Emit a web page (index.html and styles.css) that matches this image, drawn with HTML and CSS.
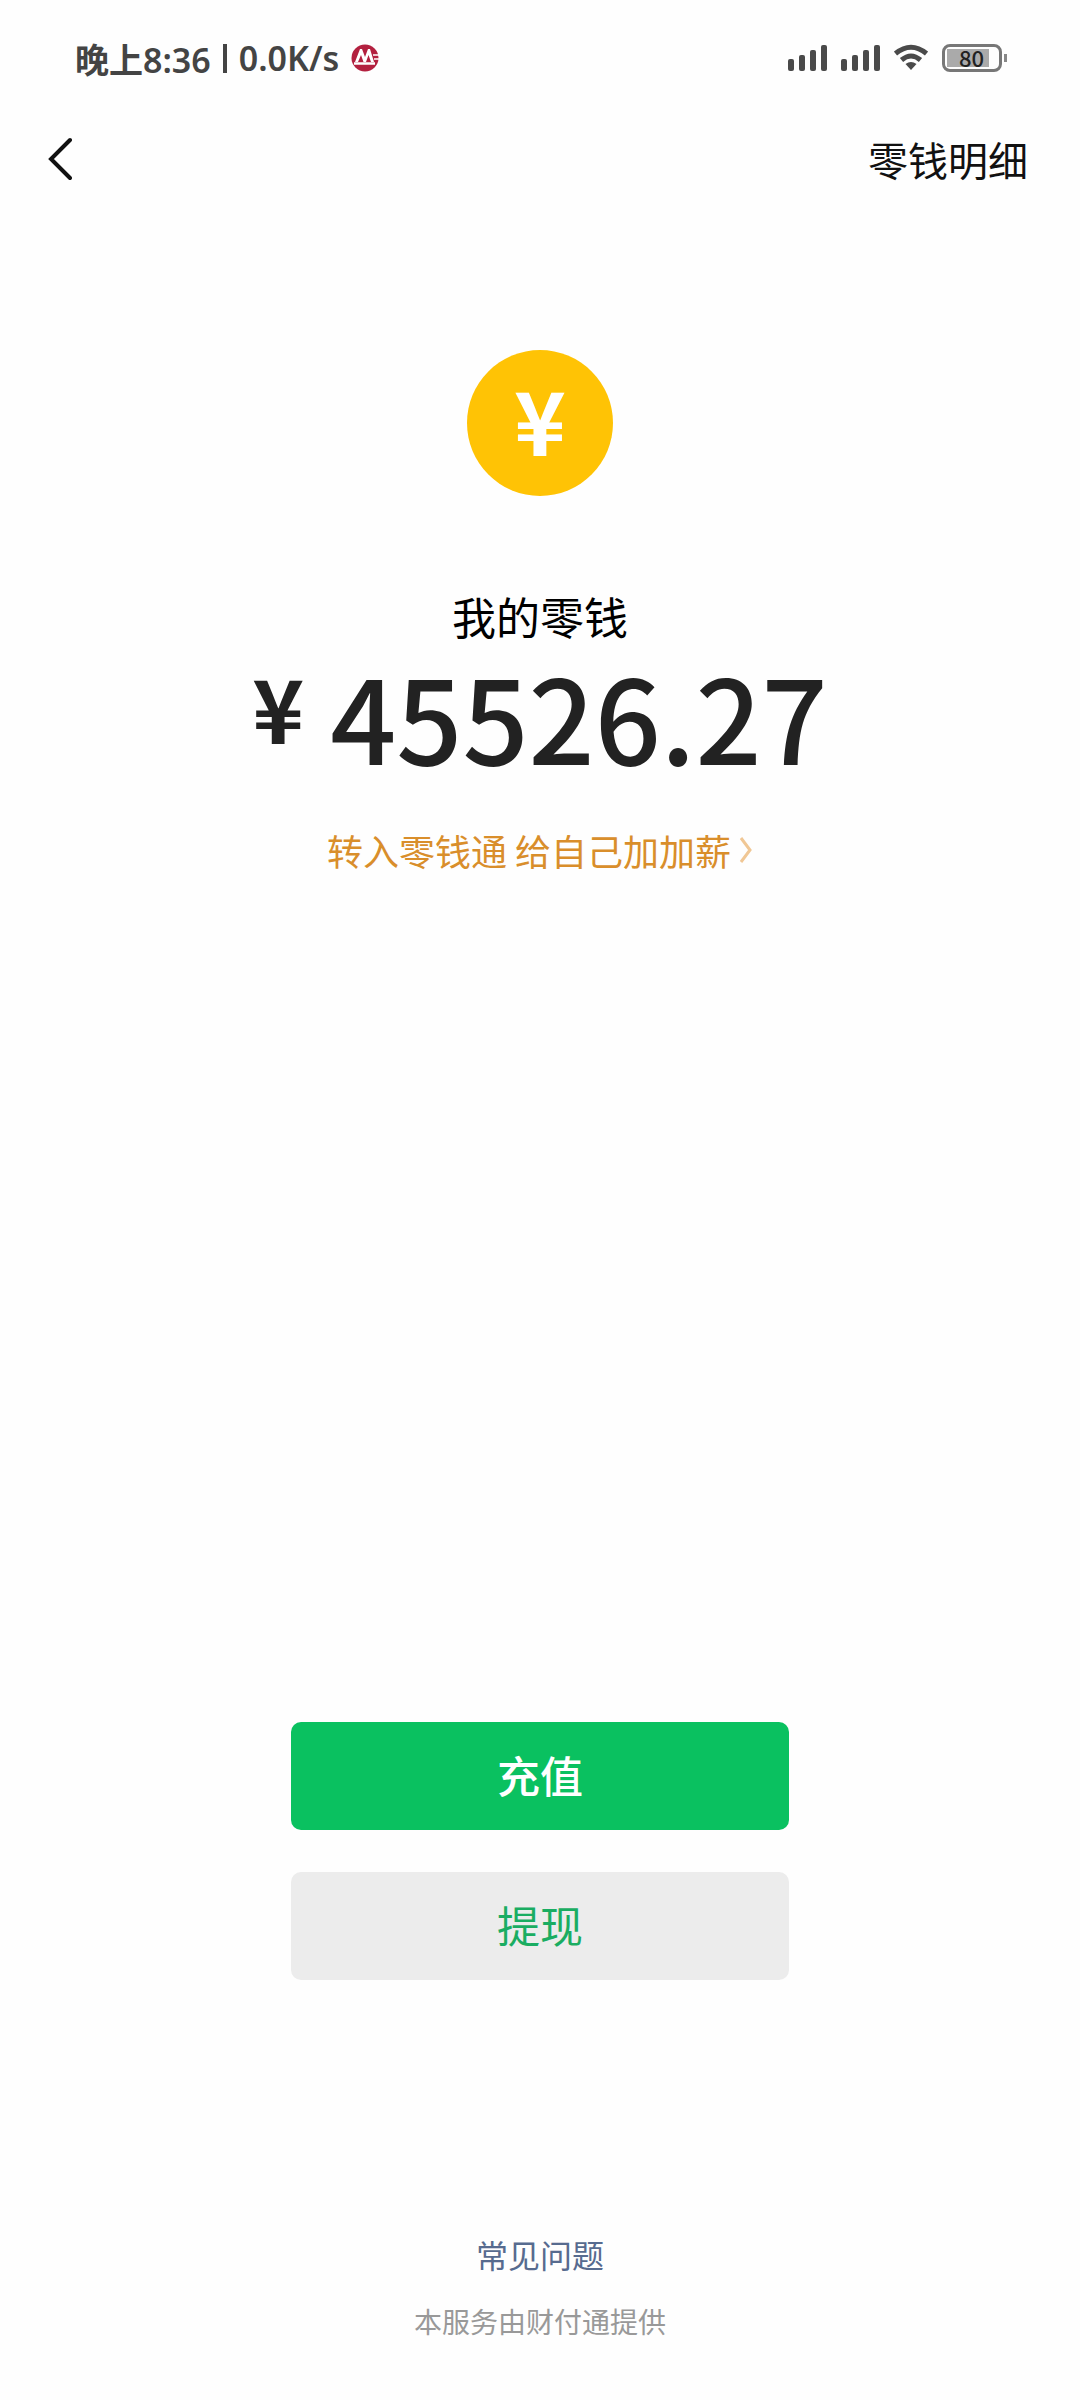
FILE: index.html
```html
<!DOCTYPE html>
<html lang="zh-CN">
<head>
<meta charset="utf-8">
<meta name="viewport" content="width=device-width, initial-scale=1">
<title>我的零钱</title>
<link rel="stylesheet" href="styles.css">
</head>
<body>
<div class="status">
  <div class="status-left">
    <span>晚上8:36</span>
    <span class="divider"></span>
    <span>0.0K/s</span>
    <svg class="bank" viewBox="0 0 28 28" aria-hidden="true">
      <circle cx="14" cy="14" r="13.500" fill="#b3203f"/>
      <path d="M4 18 9 5h2l3 8 3-8h2l4 13h-3l-2.500-7-2.500 7h-2.500L10 11l-3 7z" fill="#fff"/>
      <path d="M3 19.500h21" stroke="#fff" stroke-width="2.500"/>
      <path d="M22 11h6M23 15h5" stroke="#fff" stroke-width="1.500"/>
    </svg>
  </div>
  <div class="status-right">
    <svg class="signal" viewBox="0 0 39 28" aria-hidden="true"><g fill="#4a4a4a"><rect y="15" width="6" height="12" rx="2"/><rect x="11" y="11" width="6" height="16" rx="2"/><rect x="22" y="6" width="6" height="21" rx="2"/><rect x="33" y="1" width="6" height="26" rx="2"/></g></svg>
    <svg class="signal" viewBox="0 0 39 28" aria-hidden="true"><g fill="#4a4a4a"><rect y="15" width="6" height="12" rx="2"/><rect x="11" y="11" width="6" height="16" rx="2"/><rect x="22" y="6" width="6" height="21" rx="2"/><rect x="33" y="1" width="6" height="26" rx="2"/></g></svg>
    <svg class="wifi" viewBox="0 0 34 28" aria-hidden="true"><path d="M1.500 9.500Q17-3 32.500 9.500M7.500 16q9.500-8 19 0" fill="none" stroke="#4a4a4a" stroke-width="5"/><path d="M11.500 20q5.500-4 11 0L17 26z" fill="#4a4a4a"/></svg>
    <div class="battery"><span class="battery-level">80</span></div>
  </div>
</div>
<header class="nav">
  <button class="back" type="button" aria-label="返回"><svg viewBox="0 0 24 44" aria-hidden="true"><path d="M22 3 3 22l19 19" fill="none" stroke="#111" stroke-width="4" stroke-linecap="round"/></svg></button>
  <a class="details" href="#">零钱明细</a>
</header>
<main class="wallet">
  <div class="coin">¥</div>
  <h1 class="title">我的零钱</h1>
  <p class="amount"><span class="currency">¥</span><span>45526.27</span></p>
  <a class="promo" href="#">转入零钱通 给自己加加薪<svg viewBox="0 0 14 26" aria-hidden="true"><path d="m2 1 9 12-9 12" fill="none" stroke="#f0c795" stroke-width="3"/></svg></a>
  <div class="actions">
    <button class="btn primary" type="button">充值</button>
    <button class="btn" type="button">提现</button>
  </div>
</main>
<footer class="footer">
  <a class="faq" href="#">常见问题</a>
  <p class="provider">本服务由财付通提供</p>
</footer>
</body>
</html>
```
FILE: styles.css
```css
* { box-sizing: border-box; }
body {
  margin: 0;
  min-height: 100vh;
  display: flex;
  flex-direction: column;
  background: #fefefe;
  color: #111;
  font-family: "Noto Sans CJK SC", "Noto Sans", sans-serif;
}
a { text-decoration: none; color: inherit; }
p, h1 { margin: 0; font-weight: 400; }
svg { display: block; }
button { border: 0; padding: 0; font: inherit; cursor: pointer; }

.status {
  display: flex;
  justify-content: space-between;
  align-items: center;
  height: 116px;
  padding: 0 72px 0 75px;
  color: #444;
  font: 600 34px "Noto Sans", "Noto Sans CJK SC", sans-serif;
}
.status-left, .status-right { display: flex; align-items: center; }
.status-left { gap: 12px; }
.status-right { gap: 14px; }
.divider { width: 4px; height: 29px; background: #444; }
.bank { width: 28px; height: 28px; }
.signal { width: 39px; height: 28px; }
.wifi { width: 34px; height: 28px; }
.battery {
  position: relative;
  width: 60px;
  height: 28px;
  margin-right: 6px;
  padding: 2px;
  border: 3px solid #777;
  border-radius: 8px;
}
.battery::after {
  content: "";
  position: absolute;
  right: -8px;
  top: 7px;
  width: 3px;
  height: 8px;
  background: #888;
}
.battery-level {
  display: block;
  width: 42px;
  height: 18px;
  background: #aaa;
  color: #222;
  font: 500 22px/16px "Noto Sans CJK SC", sans-serif;
  text-align: right;
  padding-right: 5px;
}

.nav {
  display: flex;
  justify-content: space-between;
  align-items: center;
  height: 86px;
  padding: 0 52px 0 48px;
}
.back { background: none; }
.back svg { width: 24px; height: 44px; }
.details { font-size: 40px; }

.wallet {
  flex: 1;
  display: flex;
  flex-direction: column;
  align-items: center;
  padding-top: 148px;
}
.coin {
  width: 146px;
  height: 146px;
  border-radius: 50%;
  background: #ffc305;
  color: #fff;
  font: 700 88px/136px "Noto Sans CJK SC", sans-serif;
  text-align: center;
}
.title {
  margin-top: 84px;
  font-size: 44px;
  line-height: 72px;
  color: #000;
}
.amount {
  display: flex;
  align-items: flex-start;
  gap: 26px;
  color: #222;
  font-size: 116px;
  line-height: 124px;
  font-weight: 500;
}
.currency { font-size: 88px; line-height: 108px; font-weight: 700; }
.promo {
  display: flex;
  align-items: center;
  gap: 8px;
  margin-top: 48px;
  font-size: 36px;
  line-height: 52px;
  color: #d98e2b;
}
.promo svg { width: 14px; height: 26px; }
.actions {
  display: flex;
  flex-direction: column;
  gap: 42px;
  width: 498px;
  margin-top: auto;
}
.btn {
  height: 108px;
  padding-bottom: 4px;
  border-radius: 10px;
  background: #ececec;
  color: #1aad62;
  font-size: 43px;
}
.primary { background: #0ac160; color: #fff; font-weight: 500; }

.footer {
  display: flex;
  flex-direction: column;
  align-items: center;
  gap: 22px;
  padding: 250px 0 58px;
}
.faq { font-size: 32px; line-height: 48px; color: #576b8f; }
.provider { font-size: 28px; line-height: 42px; color: #999; }
```
